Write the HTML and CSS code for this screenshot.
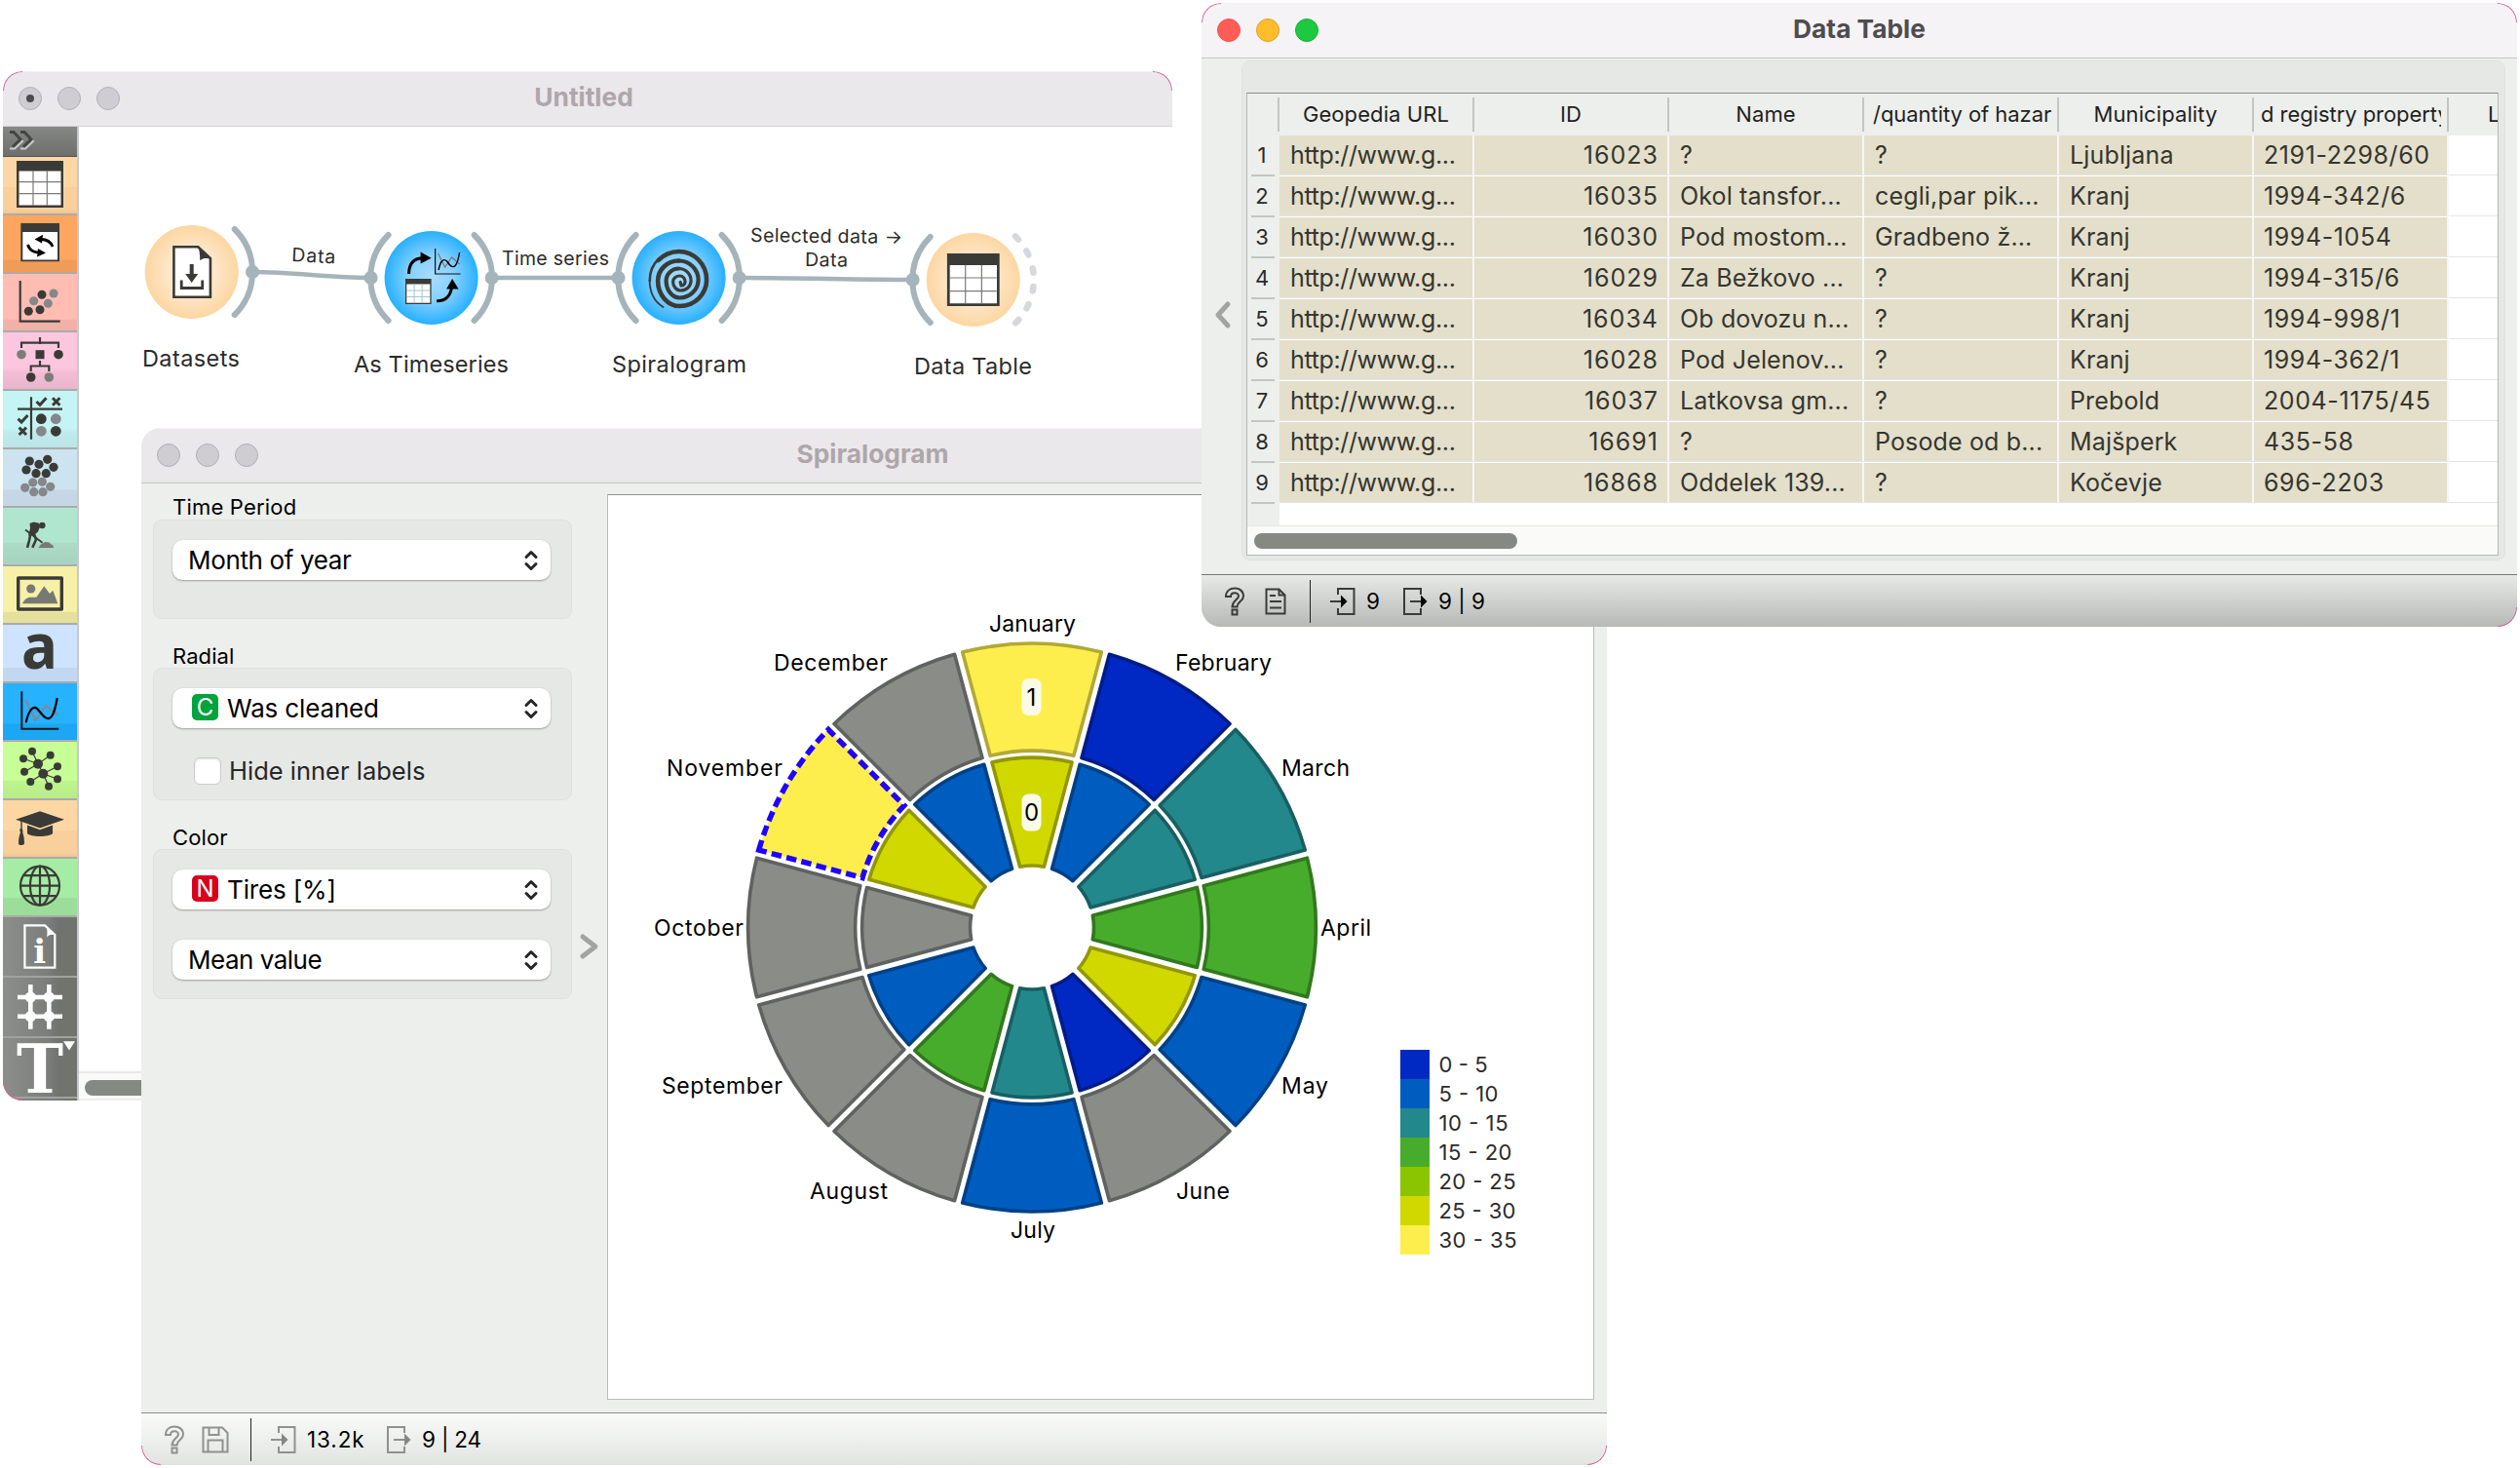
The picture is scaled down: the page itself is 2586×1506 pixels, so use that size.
FILE: index.html
```html
<!DOCTYPE html>
<html lang="en">
<head>
<meta charset="utf-8">
<title>Orange workflow</title>
<link rel="stylesheet" href="styles.css">
</head>
<body>
<main class="desktop">

<section class="window win-main">
  <i class="corner tl"></i><i class="corner tr"></i><i class="corner bl"></i>
  <header class="titlebar inactive">
    <span class="lights"><b class="dirty"></b><b></b><b></b></span>
    <h1>Untitled</h1>
  </header>
  <div class="main-body">
    <nav class="dock">
      <div class="dock-head">
        <svg width="76" height="32"><g fill="none"><path stroke="#c9cbc8" stroke-width="2" d="M7 22.500H12L20 15L13 8M18 22.500H23L31 15L24 8"/><path stroke="#444643" stroke-width="3" d="M7 5.500H11L18 13L10 20.500M18 5.500H22L29 13L21 20.500"/></g></svg>
      </div>
      <div class="cat data"><svg viewBox="0 0 76 58"><path class="k" d="M14 4h48v48H14z"/><path fill="#fff" d="M16.5 14.500h43v35h-43z"/><path class="thin" d="M31 14v36M45.300 14v36M16 25.700h44M16 37.700h44"/></svg></div>
      <div class="cat transform"><svg viewBox="0 0 76 58"><path class="k" d="M18.300 8h39.700v39.300H18.300z"/><path fill="#fff" d="M20.300 17h35.700v28.500H20.300z"/><g fill="none" stroke="#000" stroke-width="2.800"><path d="M51 32C49 27 44 24.500 39 24.500M25.500 30C27 35 31 37.500 36 38"/></g><path d="M32.500 24.500L41 19.800L40 28.500zM44 38.500L36 34L35 42.500z"/></svg></div>
      <div class="cat visualize"><svg viewBox="0 0 76 58"><path class="ln" d="M17.700 7v41.700h41"/><g class="k"><circle cx="40" cy="21.300" r="4.500"/><circle cx="26.300" cy="38.300" r="4.500"/><circle cx="38" cy="36.700" r="4.500"/></g><g class="g"><circle cx="52" cy="20" r="4.500"/><circle cx="31.700" cy="27.700" r="4.500"/><circle cx="46.300" cy="30.300" r="4.500"/></g></svg></div>
      <div class="cat model"><svg viewBox="0 0 76 58"><path class="ln" d="M38 5v7M19 16v-5.300h38V16M38 29v6M28.700 40v-5.500h18.600V40"/><path class="k" d="M33.500 18.200h9v9h-9z"/><g class="k"><circle cx="57" cy="22.700" r="4.800"/><circle cx="28.700" cy="46" r="4.800"/></g><g fill="#7b7d79"><circle cx="19" cy="22.700" r="4.800"/><circle cx="47.300" cy="46" r="4.800"/></g></svg></div>
      <div class="cat evaluate"><svg viewBox="0 0 76 58"><path class="ln" d="M29 6.300v43.400M15 18.700h46"/><path fill="none" stroke="#3a3b37" stroke-width="3" d="M34.500 11l3.500 3.300 6.500-7M15.500 28.700l3.500 3.300 6.500-7M51 7.300l7.400 7.400M58.400 7.300L51 14.700M16.600 37.600l7.400 7.400M24 37.600L16.600 45"/><g class="k"><circle cx="39.300" cy="28.700" r="5.400"/><circle cx="54.300" cy="41.300" r="5.400"/></g><g class="g"><circle cx="54.300" cy="28.700" r="5.400"/><circle cx="39.300" cy="41.300" r="5.400"/></g></svg></div>
      <div class="cat unsup"><svg viewBox="0 0 76 58"><g class="k"><circle cx="27.300" cy="12" r="4.600"/><circle cx="37" cy="15.300" r="4.600"/><circle cx="45.700" cy="10.300" r="4.600"/><circle cx="52" cy="18.300" r="4.600"/><circle cx="24" cy="21" r="4.600"/><circle cx="34" cy="24.700" r="4.600"/><circle cx="44.300" cy="24.700" r="4.600"/></g><g class="g"><circle cx="30.700" cy="34" r="4.600"/><circle cx="40.300" cy="33.300" r="4.600"/><circle cx="22.700" cy="39.300" r="4.600"/><circle cx="48.700" cy="38.300" r="4.600"/><circle cx="31.700" cy="43.700" r="4.600"/><circle cx="41" cy="43.700" r="4.600"/></g></svg></div>
      <div class="cat spectro"><svg viewBox="0 0 76 58"><circle class="k" cx="40.300" cy="18" r="3.300"/><path class="k" d="M27.500 16l4-1.500 5 1 1.500 4-2 5-4 3.500-6 .5 2-7.500z"/><path fill="none" stroke="#3a3b37" stroke-width="1.800" d="M23 22.500l17.500 13.300"/><path fill="none" stroke="#3a3b37" stroke-width="2.600" d="M28.500 26l-1.500 7.500-2 7.300M32 27l2 5.500-3.700 8.300"/><path fill="#777975" d="M36.300 41l2.700-3.500 4-2.500 4.500.5 2 2 1.500.5 1.300 3z"/></svg></div>
      <div class="cat image"><svg viewBox="0 0 76 58"><path fill="none" stroke="#3a3b37" stroke-width="3.400" stroke-linejoin="round" d="M15.700 12h44.600v32H15.700z"/><circle fill="#777975" cx="28.700" cy="23" r="4.600"/><path fill="#777975" d="M20 38.300c2-5 6-7 9-6.500l5.300-.1 8-11.400 5.700 7.700 3.300-3.300 5 13.600z"/></svg></div>
      <div class="cat text"><svg viewBox="0 0 76 58"><text class="glyph-a" x="19" y="45" textLength="37" lengthAdjust="spacingAndGlyphs">a</text></svg></div>
      <div class="cat series"><svg viewBox="0 0 76 58"><path fill="none" stroke="#14181c" stroke-width="2" d="M19.300 8.300v38.400h38"/><path fill="none" stroke="#84888c" stroke-width="2" d="M23.300 16.700l10 21.300L44 22.700l12 9.600"/><path fill="none" stroke="#000" stroke-width="2.200" d="M23.700 40.300C26 29 31 21 36 27C41 33 45 39 49.500 34.500C53.500 30 54 23 55.700 15"/></svg></div>
      <div class="cat network"><svg viewBox="0 0 76 58"><path fill="none" stroke="#3a3b37" stroke-width="1.200" d="M30 9.700l6 13M21 17.300l15 5.400 12.700-9M36 22.700L22 30.700M36 22.700l5.300 10 14.700-7.400M41.300 32.700l14.700 5.600M28.300 41l13-8.300 5.700 13"/><g class="k"><circle cx="30" cy="9.700" r="4"/><circle cx="21" cy="17.300" r="4"/><circle cx="48.700" cy="13.700" r="4"/><circle cx="36" cy="22.700" r="5"/><circle cx="56" cy="25.300" r="4"/><circle cx="22" cy="30.700" r="4"/><circle cx="41.300" cy="32.700" r="5"/><circle cx="56" cy="38.300" r="4"/><circle cx="28.300" cy="41" r="4"/><circle cx="47" cy="45.700" r="4"/></g></svg></div>
      <div class="cat edu"><svg viewBox="0 0 76 58"><path class="k" d="M13 19.700L38 11.300l25 8.400-25 8.800zM25 25.500l13 4.800 13-4.800V34c-3 4-23 4-26 0zM17.800 29c2.600 0 3 2 2.400 4 1.300 3 1.800 7 1.800 11.500-1.500 2-5 2-6 0 0-4.500.5-8 2-11.500-1-2-.6-4-.2-4z"/><path fill="none" stroke="#3a3b37" stroke-width="1.400" d="M19 21v10"/></svg></div>
      <div class="cat geo"><svg viewBox="0 0 76 58"><g class="ln"><circle cx="38" cy="27.700" r="20"/><ellipse cx="38" cy="27.700" rx="10" ry="20"/><path d="M38 7.700v40M18 27.700h40M22 17.200h32M22 38.200h32"/></g></svg></div>
      <div class="tool"><svg viewBox="0 0 76 60"><path fill="none" stroke="#fff" stroke-width="2.200" d="M22.400 8.400H43l10.300 9.600v33.700H22.400z"/><path fill="#fff" d="M43 7.500l11 10.500c-4-.5-7 0-9 2.500 1-5 .5-10-2-13z"/><text class="glyph-i" x="37.700" y="47" text-anchor="middle">i</text></svg></div>
      <div class="tool"><svg viewBox="0 0 76 60"><path fill="none" stroke="#fff" stroke-width="4.600" d="M28.300 7v45.700M47.300 7v45.700M15 20h46M15 39.700h46"/><g fill="#fff"><circle cx="28.300" cy="20" r="5.600"/><circle cx="47.300" cy="20" r="5.600"/><circle cx="28.300" cy="39.700" r="5.600"/><circle cx="47.300" cy="39.700" r="5.600"/></g></svg></div>
      <div class="tool"><svg viewBox="0 0 76 60"><text class="glyph-t" x="14" y="55.500" textLength="48" lengthAdjust="spacingAndGlyphs">T</text><path fill="#fff" d="M62 3.300h12l-6 9.300z"/></svg></div>
    </nav>
    <div class="canvas">
      <svg class="scheme" viewBox="81 130 1122 969" width="1122" height="969">
        <defs>
          <radialGradient id="gOrange"><stop offset="0" stop-color="#fdf0e0"/><stop offset=".55" stop-color="#fde5c6"/><stop offset="1" stop-color="#fdd6a1"/></radialGradient>
          <radialGradient id="gBlue"><stop offset="0" stop-color="#a6dcff"/><stop offset=".5" stop-color="#85d0ff"/><stop offset="1" stop-color="#27b0ff"/></radialGradient>
          <path id="arcR" d="M44 -44A62 62 0 0 1 44 44"/>
          <path id="arcL" d="M-44 -44A62 62 0 0 0 -44 44"/>
        </defs>
        <g class="link">
          <path d="M259 279C305 279 334 285 381 285M505 285H635M759 285C820 285 877 287 937 287"/>
        </g>
        <g transform="translate(196.700 279)">
          <circle r="48" fill="url(#gOrange)"/><use href="#arcR" class="arc"/><circle class="dot" cx="62.300" r="7"/>
          <path fill="#fff" stroke="#3a3b37" stroke-width="2.600" d="M-18.300 -25.700H6.500L19.200 -14V25.700H-18.300z"/><path class="k" d="M6 -27l14.500 13.500c-5-1-9-1-12 1.500 0-6-.5-11-2.500-15z"/>
          <path fill="none" stroke="#3a3b37" stroke-width="2.800" d="M-10.500 8.500v8h21.500v-8"/><path class="k" d="M-2 -8H2V2H6.500L0 11L-6.500 2H-2z"/>
        </g>
        <g transform="translate(442.600 285)">
          <circle r="48" fill="url(#gBlue)"/><use href="#arcL" class="arc"/><use href="#arcR" class="arc"/><circle class="dot" cx="-62" r="7"/><circle class="dot" cx="62" r="7"/>
          <path fill="none" stroke="#000" stroke-width="3" d="M-23 -4C-23 -15 -18 -20.300 -8 -20.300M5.500 23.700C15 24 20 18 21 9"/><path d="M-11 -26.500L0 -20.300L-11 -14.500zM15.500 11.500L21.500 1L28 11.500z"/>
          <path fill="none" stroke="#111" stroke-width="1.200" d="M4 -30V-4H30"/><path fill="none" stroke="#777" stroke-width="1.200" d="M7 -25l7 14 7-10 8 7"/><path fill="none" stroke="#000" stroke-width="1.400" d="M7.500 -8C9 -16 12 -21 16 -17C20 -11 23 -10 25 -13C27 -16 28 -20 29 -26"/>
          <path class="k" d="M-26.600 1H0V27H-26.600z"/><path fill="#fff" d="M-25.300 6.500H-1.300V25.700H-25.300z"/><path stroke="#9fc4dc" fill="none" d="M-17.500 6.500V25.500M-9.500 6.500V25.500M-25 13H-1.500M-25 19.500H-1.500"/>
        </g>
        <g transform="translate(696.600 285)">
          <circle r="48" fill="url(#gBlue)"/><use href="#arcL" class="arc"/><use href="#arcR" class="arc"/><circle class="dot" cx="-62" r="7"/><circle class="dot" cx="62" r="7"/>
          <g fill="none" stroke="#3a3b37" stroke-width="4.600" stroke-linecap="round"><path stroke-width="1.800" d="M-16 30C-26 24 -30 14 -30 2"/><path stroke-width="2.600" d="M-29.800 3A30 30 0 0 1 -20 -20"/><path d="M-21 -18A30 30 0 0 1 0 -27A28.500 29 0 0 1 28.500 2A27.500 27 0 0 1 1 29A22.500 26 0 0 1 -21.500 3A21.500 20.500 0 0 1 0 -17.500"/><path stroke-width="4.200" d="M0 -17.500A20 19.500 0 0 1 20 2A19 18.500 0 0 1 1 20.500A14 17.500 0 0 1 -13 3A13 12.500 0 0 1 0 -9.500"/><path stroke-width="3.200" d="M0 -9.500A12.500 12.500 0 0 1 12.500 3A10.500 10 0 0 1 2 13A8 9 0 0 1 -6 4A7 6 0 0 1 1 -2A5.500 6 0 0 1 6.500 4A4 4 0 0 1 2.500 8L1.500 4.500"/></g>
        </g>
        <g transform="translate(998.700 287)">
          <circle r="48" fill="url(#gOrange)"/><use href="#arcL" class="arc"/><circle class="dot" cx="-62" r="7"/>
          <path class="arc open" d="M43.300 -44.500A62 62 0 0 1 43.300 44.500"/>
          <path class="k" d="M-26.800 -27H27V27H-26.800z"/><path fill="#fff" d="M-24 -15H24.300V24.200H-24z"/><path class="thin" d="M-8 -15V24M8.700 -15V24M-24 -2H24M-24 11.700H24"/>
        </g>
        <g class="node-label">
          <text x="146" y="376" textLength="100">Datasets</text>
          <text x="363" y="382" textLength="159">As Timeseries</text>
          <text x="628" y="382" textLength="138">Spiralogram</text>
          <text x="938" y="384" textLength="121">Data Table</text>
        </g>
        <g class="link-label">
          <text x="299" y="268" textLength="45" transform="rotate(3 299 268)">Data</text>
          <text x="515" y="272" textLength="110">Time series</text>
          <text x="770" y="248" textLength="156" transform="rotate(.7 770 248)">Selected data →</text>
          <text x="826" y="273" textLength="44" transform="rotate(.7 826 273)">Data</text>
        </g>
      </svg>
      <div class="hscroll"><span></span></div>
    </div>
  </div>
</section>

<section class="window win-spiral">
  <i class="corner bl"></i><i class="corner br"></i>
  <header class="titlebar inactive">
    <span class="lights"><b></b><b></b><b></b></span>
    <h1>Spiralogram</h1>
  </header>
  <div class="spiral-body">
    <aside class="controls">
      <h2 class="s1">Time Period</h2>
      <div class="group g1">
        <div class="combo"><span class="t1">Month of year</span><svg width="16" height="24"><path d="M3 8.500L8 3.500L13 8.500M3 15.500L8 20.500L13 15.500"/></svg></div>
      </div>
      <h2>Radial</h2>
      <div class="group g2">
        <div class="combo"><em class="badge cvar">C</em><span class="t2">Was cleaned</span><svg width="16" height="24"><path d="M3 8.500L8 3.500L13 8.500M3 15.500L8 20.500L13 15.500"/></svg></div>
        <label class="check"><i></i><span>Hide inner labels</span></label>
      </div>
      <h2>Color</h2>
      <div class="group g3">
        <div class="combo"><em class="badge nvar">N</em><span class="t3">Tires [%]</span><svg width="16" height="24"><path d="M3 8.500L8 3.500L13 8.500M3 15.500L8 20.500L13 15.500"/></svg></div>
        <div class="combo"><span class="t4">Mean value</span><svg width="16" height="24"><path d="M3 8.500L8 3.500L13 8.500M3 15.500L8 20.500L13 15.500"/></svg></div>
      </div>
    </aside>
    <div class="splitter"><svg width="20" height="28"><path d="M3 4L16 14L3 24"/></svg></div>
    <div class="chart">
      <svg viewBox="624 508 1011 927" width="1011" height="927">
        <defs>
          <path id="so" d="M-71.330 -282.430A291.300 291.300 0 0 1 71.330 -282.430L42.850 -176.160A181.300 181.300 0 0 0 -42.850 -176.160Z"/>
          <path id="si" d="M-41.040 -169.400A174.300 174.300 0 0 1 41.040 -169.400L12.340 -62.290A63.500 63.500 0 0 0 -12.340 -62.290Z"/>
        </defs>
        <g class="ring" transform="translate(1059 951.500)">
          <use href="#so" class="c7"/>
          <use href="#so" class="c1" transform="rotate(30)"/>
          <use href="#so" class="c3" transform="rotate(60)"/>
          <use href="#so" class="c4" transform="rotate(90)"/>
          <use href="#so" class="c2" transform="rotate(120)"/>
          <use href="#so" class="c0" transform="rotate(150)"/>
          <use href="#so" class="c2" transform="rotate(180)"/>
          <use href="#so" class="c0" transform="rotate(210)"/>
          <use href="#so" class="c0" transform="rotate(240)"/>
          <use href="#so" class="c0" transform="rotate(270)"/>
          <use href="#so" class="c7 selected" transform="rotate(300)"/>
          <use href="#so" class="c0" transform="rotate(330)"/>
          <use href="#si" class="c6"/>
          <use href="#si" class="c2" transform="rotate(30)"/>
          <use href="#si" class="c3" transform="rotate(60)"/>
          <use href="#si" class="c4" transform="rotate(90)"/>
          <use href="#si" class="c6" transform="rotate(120)"/>
          <use href="#si" class="c1" transform="rotate(150)"/>
          <use href="#si" class="c3" transform="rotate(180)"/>
          <use href="#si" class="c4" transform="rotate(210)"/>
          <use href="#si" class="c2" transform="rotate(240)"/>
          <use href="#si" class="c0" transform="rotate(270)"/>
          <use href="#si" class="c6" transform="rotate(300)"/>
          <use href="#si" class="c2" transform="rotate(330)"/>
        </g>
        <g class="ring-label">
          <rect x="1048.500" y="696" width="20" height="38" rx="7"/><rect x="1048.500" y="814.500" width="20" height="38" rx="7"/>
          <text x="1058.500" y="724" text-anchor="middle">1</text><text x="1058.500" y="842" text-anchor="middle">0</text>
        </g>
        <g class="month">
          <text x="1015" y="648" textLength="89">January</text>
          <text x="1206" y="688" textLength="99">February</text>
          <text x="1315" y="796" textLength="70">March</text>
          <text x="1355" y="960" textLength="52">April</text>
          <text x="1315" y="1122" textLength="48">May</text>
          <text x="1207" y="1230" textLength="55">June</text>
          <text x="1037" y="1270" textLength="46">July</text>
          <text x="831" y="1230" textLength="80">August</text>
          <text x="679" y="1122" textLength="124">September</text>
          <text x="671" y="960" textLength="92">October</text>
          <text x="684" y="796" textLength="119">November</text>
          <text x="794" y="688" textLength="117">December</text>
        </g>
        <g class="swatches">
          <rect x="1437" y="1077" width="30" height="30" fill="#0029c3"/>
          <rect x="1437" y="1107" width="30" height="30" fill="#005dc0"/>
          <rect x="1437" y="1137" width="30" height="30" fill="#23888c"/>
          <rect x="1437" y="1167" width="30" height="30" fill="#47ac2b"/>
          <rect x="1437" y="1197" width="30" height="30" fill="#8bc400"/>
          <rect x="1437" y="1227" width="30" height="30" fill="#d1d800"/>
          <rect x="1437" y="1257" width="30" height="30" fill="#feee4d"/>
        </g>
        <g class="legend">
          <text x="1476.500" y="1100" textLength="50">0 - 5</text>
          <text x="1476.500" y="1130" textLength="61">5 - 10</text>
          <text x="1476.500" y="1160" textLength="71">10 - 15</text>
          <text x="1476.500" y="1190" textLength="75">15 - 20</text>
          <text x="1476.500" y="1220" textLength="79">20 - 25</text>
          <text x="1476.500" y="1250" textLength="79">25 - 30</text>
          <text x="1476.500" y="1280" textLength="80">30 - 35</text>
        </g>
      </svg>
    </div>
  </div>
  <footer class="status light">
    <svg class="q" width="22" height="30" viewBox="0 0 22 30"><path d="M2 10C2 4.500 6 1.500 11 1.500S20 4.500 20 9.500C20 15 13.500 15 13.500 20.500H8.500C8.500 14 15 13 15 9.500C15 5 7 5 7 10zM8.500 23.500h5v5h-5z"/></svg>
    <svg class="save" width="28" height="28" viewBox="0 0 28 28"><path d="M1.500 1.500H21L26.500 7V26.500H1.500zM7.500 2V9H17.500V2M6.500 26V14.500H21.500V26"/></svg>
    <i class="rule"></i>
    <svg class="io" width="26" height="30" viewBox="0 0 26 30"><path d="M8 8V2H24.500V28H8V22M0 15H12"/><path class="head" d="M11 8.500L17.500 15L11 21.500z"/></svg>
    <span class="n1">13.2k</span>
    <svg class="io out" width="26" height="30" viewBox="0 0 26 30"><path d="M18 8V2H1V28H18V22M7 15H20"/><path class="head" d="M18 8.500L24.500 15L18 21.500z"/></svg>
    <span class="n2">9 | 24</span>
  </footer>
</section>

<section class="window win-table">
  <i class="corner tl"></i><i class="corner tr"></i><i class="corner br"></i>
  <header class="titlebar">
    <span class="lights"><b class="red"></b><b class="yellow"></b><b class="green"></b></span>
    <h1>Data Table</h1>
  </header>
  <div class="table-body">
    <div class="collapse"><svg width="20" height="28"><path d="M15 3L5 14L15 25"/></svg></div>
    <div class="panel">
      <div class="frame">
        <div class="thead"><i></i><span>Geopedia URL</span><span>ID</span><span>Name</span><span class="clip h4">/quantity of hazar</span><span>Municipality</span><span class="clip h6">d registry property</span><span class="clip last">L</span></div>
        <div class="row"><i>1</i><span class="url">http://www.g...</span><span class="num">16023</span><span>?</span><span>?</span><span>Ljubljana</span><span class="reg">2191-2298/60</span><span></span></div>
        <div class="row"><i>2</i><span class="url">http://www.g...</span><span class="num">16035</span><span>Okol tansfor...</span><span>cegli,par pik...</span><span>Kranj</span><span class="reg">1994-342/6</span><span></span></div>
        <div class="row"><i>3</i><span class="url">http://www.g...</span><span class="num">16030</span><span>Pod mostom...</span><span>Gradbeno ž...</span><span>Kranj</span><span class="reg">1994-1054</span><span></span></div>
        <div class="row"><i>4</i><span class="url">http://www.g...</span><span class="num">16029</span><span>Za Bežkovo ...</span><span>?</span><span>Kranj</span><span class="reg">1994-315/6</span><span></span></div>
        <div class="row"><i>5</i><span class="url">http://www.g...</span><span class="num">16034</span><span>Ob dovozu n...</span><span>?</span><span>Kranj</span><span class="reg">1994-998/1</span><span></span></div>
        <div class="row"><i>6</i><span class="url">http://www.g...</span><span class="num">16028</span><span>Pod Jelenov...</span><span>?</span><span>Kranj</span><span class="reg">1994-362/1</span><span></span></div>
        <div class="row"><i>7</i><span class="url">http://www.g...</span><span class="num">16037</span><span>Latkovsa gm...</span><span>?</span><span>Prebold</span><span class="reg">2004-1175/45</span><span></span></div>
        <div class="row"><i>8</i><span class="url">http://www.g...</span><span class="num">16691</span><span>?</span><span>Posode od b...</span><span>Majšperk</span><span class="reg">435-58</span><span></span></div>
        <div class="row"><i>9</i><span class="url">http://www.g...</span><span class="num">16868</span><span>Oddelek 139...</span><span>?</span><span>Kočevje</span><span class="reg">696-2203</span><span></span></div>
        <div class="filler"></div>
        <div class="hscroll"><span></span></div>
      </div>
    </div>
  </div>
  <footer class="status dark">
    <svg class="q" width="22" height="30" viewBox="0 0 22 30"><path d="M2 10C2 4.500 6 1.500 11 1.500S20 4.500 20 9.500C20 15 13.500 15 13.500 20.500H8.500C8.500 14 15 13 15 9.500C15 5 7 5 7 10zM8.500 23.500h5v5h-5z"/></svg>
    <svg class="doc" width="22" height="28" viewBox="0 0 22 28"><path d="M1.500 1.500H14.500L20.500 7.500V26.500H1.500zM14.500 2V7.500H20M5 8H11M5 14H17M5 20.500H17"/></svg>
    <i class="rule"></i>
    <svg class="io" width="26" height="30" viewBox="0 0 26 30"><path d="M8 8V2H24.500V28H8V22M0 15H12"/><path class="head" d="M11 8.500L17.500 15L11 21.500z"/></svg>
    <span class="n3">9</span>
    <svg class="io out" width="26" height="30" viewBox="0 0 26 30"><path d="M18 8V2H1V28H18V22M7 15H20"/><path class="head" d="M18 8.500L24.500 15L18 21.500z"/></svg>
    <span class="n4">9 | 9</span>
  </footer>
</section>

</main>
</body>
</html>
```
FILE: styles.css
```css
* { box-sizing: border-box; }
body { margin: 0; background: #fff; font-family: Inter, "Liberation Sans", sans-serif; color: #000; }
h1, h2 { margin: 0; font-weight: 400; }
i, em { font-style: normal; }
svg { display: block; overflow: visible; }
.desktop { position: relative; width: 2586px; height: 1506px; overflow: hidden; }

/* windows */
.window { position: absolute; display: flex; flex-direction: column; overflow: hidden; }
.win-main { left: 3px; top: 73px; width: 1200px; height: 1056px; border-radius: 20px 20px 0 20px; }
.win-spiral { left: 145px; top: 439px; width: 1504px; height: 1064px; border-radius: 20px; background: #edefec; }
.win-table { left: 1233px; top: 3px; width: 1350px; height: 640px; border-radius: 20px; background: #edefec; }
.corner { position: absolute; width: 20px; height: 20px; z-index: 2; border: 0 solid #d9609f; }
.tl { left: 0; top: 0; border-width: 1px 0 0 1px; border-top-left-radius: 20px; }
.tr { right: 0; top: 0; border-width: 1px 1px 0 0; border-top-right-radius: 20px; }
.bl { left: 0; bottom: 0; border-width: 0 0 1px 1px; border-bottom-left-radius: 20px; }
.br { right: 0; bottom: 0; border-width: 0 1px 1px 0; border-bottom-right-radius: 20px; }

.titlebar { flex: none; height: 57px; display: grid; grid-template-columns: 140px 1fr 140px; align-items: center; background: #f5f3f6; border-bottom: 1px solid #c3c5c2; box-shadow: inset 0 1px 0 #f4f1f4; }
.titlebar.inactive { background: #ebe8eb; }
.win-main .titlebar { border-color: #d3d1d4; grid-template-columns: 140px 1fr 148px; }
.win-spiral .titlebar { grid-template-columns: 140px 1fr 143px; }
.titlebar h1 { font-size: 26.300px; font-weight: 700; text-align: center; color: #4f4c4f; line-height: 54px; height: 56px; }
.titlebar.inactive h1 { color: #aea6aa; }
.lights { display: flex; gap: 16px; padding-left: 16px; }
.lights b { width: 24px; height: 24px; border-radius: 50%; background: #d0cdd2; border: 1px solid #b2afb3; display: grid; place-items: center; }
.lights .dirty::after { content: ""; width: 8px; height: 8px; border-radius: 50%; background: #4c4a4c; }
.lights .red { background: #ff5d55; border-color: #f0524c; }
.lights .yellow { background: #ffbd2c; border-color: #e0a024; }
.lights .green { background: #1dc93f; border-color: #1aad33; }

/* widget dock */
.main-body { flex: 1; display: flex; min-height: 0; }
.dock { flex: none; width: 78px; border-right: 2px solid #c9c8cd; background: linear-gradient(90deg, #8a8c89, #6f716e); }
.dock svg { width: 76px; }
.dock-head { height: 31px; background: linear-gradient(#868885, #6d6f6c); border-bottom: 1px solid #555; }
.cat { height: 60px; border-bottom: 2px solid #aaaba9; }
.cat svg { height: 58px; }
.tool { height: 62px; border-bottom: 2px solid #a0a29f; background: linear-gradient(90deg, #8c8e8b, #7c7e7b 60%, #71736f 75%, #71736f); }
.tool svg { height: 60px; }
.k { fill: #3a3b37; }
.g { fill: #85878a; }
.ln { fill: none; stroke: #3a3b37; stroke-width: 2.200px; }
.thin { fill: none; stroke: #7a7b78; stroke-width: 1.200px; }
.data { background: linear-gradient(#fdd7a3 53%, #f9cf9c 54%, #f9cf9c 92%, #eec590); }
.transform { background: linear-gradient(#fea55f 78%, #f09c59 79%); }
.visualize { background: linear-gradient(#febcb3 80%, #f0b1a9 81%); }
.model { background: linear-gradient(#fdc6df 62%, #f3bcd5 72%, #e9b5cd); }
.evaluate { background: linear-gradient(#c4f4f4 65%, #bfe9ea 75%, #bbe6e8); }
.unsup { background: linear-gradient(#cce3f0 71%, #c5d7e4 72%); }
.spectro { background: linear-gradient(#b0e6d0 61%, #acdbc7 62%, #a6d4c0 91%); }
.image { background: linear-gradient(#f7f0a7 80%, #e5e09b 81%); }
.text { background: linear-gradient(#cde3ff 75%, #c2d7f0 76%); }
.series { background: linear-gradient(#27b2ff 71%, #1ca6f3 72%); }
.network { background: linear-gradient(#c7fe96 68%, #bdf48c 69%, #b8ec89); }
.edu { background: linear-gradient(#fdd7a3 53%, #f9cf9c 54%, #f9cf9c 92%, #eec590); }
.geo { background: linear-gradient(#a5eca4 69%, #9cdd9a 70%); }
.glyph-a { font: 700 64px "Noto Sans", sans-serif; fill: #3a3b37; }
.glyph-i { font: 700 34px "DejaVu Serif", serif; fill: #fff; }
.glyph-t { font: 700 70px "DejaVu Serif", serif; fill: #fff; }

/* workflow canvas */
.canvas { flex: 1; background: #fff; display: flex; flex-direction: column; width: 1122px; }
.canvas .hscroll { width: 600px; height: 31px; border-top: 2px solid #e8eae7; border-bottom: 2px solid #edefec; background: #fafbf9; padding: 7px 6px 0; }
.hscroll span { display: block; height: 16px; border-radius: 8px; background: #868883; }
.canvas .hscroll span { width: 400px; }
.link { fill: none; stroke: #a5b4bb; stroke-width: 4.400px; }
.arc { fill: none; stroke: #a5b4bb; stroke-width: 6px; stroke-linecap: round; }
.arc.open { stroke: #d7d8dd; stroke-dasharray: 4.500 14.350; stroke-width: 6.500px; }
.dot { fill: #a5b4bb; }
.node-label { font-size: 23.500px; fill: #2b2b2b; }
.link-label { font-size: 19.500px; fill: #2b2b2b; }

/* spiralogram */
.spiral-body { flex: 1; display: flex; min-height: 0; padding: 11px 13px 13px 12px; }
.controls { width: 430px; }
.controls h2 { font-size: 22px; line-height: 24px; padding-left: 20px; letter-spacing: .1px; height: 24px; margin-top: 26px; }
.controls .s1 { margin-top: 0; height: 26px; line-height: 26px; letter-spacing: .2px; }
.group { background: #e6e8e5; border: 1px solid #dfe1de; border-radius: 9px; padding: 20px 21px 0 19px; display: flex; flex-direction: column; }
.g1 { height: 102px; }
.g2 { height: 136px; }
.g3 { height: 154px; gap: 31px; }
.g1 + h2 { margin-top: 26px; }
.combo { flex: none; height: 41px; border-radius: 10px; background: #fff; box-shadow: 0 1px 2px rgba(0,0,0,.3), 0 0 1px rgba(0,0,0,.15); display: flex; align-items: center; padding: 0 12px 0 16px; font-size: 26px; }
.combo svg { margin-left: auto; }
.combo path { fill: none; stroke: #262626; stroke-width: 3px; stroke-linecap: round; stroke-linejoin: round; }
.t1, .t4 { letter-spacing: -.350px; }
.t2, .t3 { letter-spacing: -.150px; }
.t4 { letter-spacing: -.500px; }
.badge { width: 27px; height: 27px; border-radius: 5px; color: #fff; font-size: 24px; line-height: 27px; text-align: center; margin: 0 9px 2px 4px; }
.cvar { background: #00a33c; }
.nvar { background: #d9001b; }
.check { display: flex; align-items: center; gap: 8px; margin: 29px 0 0 22px; font-size: 25.500px; color: #262626; line-height: 30px; }
.check i { width: 28px; height: 28px; border-radius: 6px; background: #fff; border: 1px solid #cbcdca; box-shadow: inset 0 1px 2px rgba(0,0,0,.12); }
.splitter { width: 36px; padding: 450px 0 0 8px; }
.splitter path, .collapse path { fill: none; stroke: #a2a4a1; stroke-width: 5px; stroke-linecap: round; stroke-linejoin: round; }
.chart { width: 1013px; height: 929px; background: #fff; border: 1px solid #b9bcb8; border-top-color: #8f918e; overflow: hidden; }
.ring use { stroke-width: 3.600px; stroke-linejoin: round; }
.c0 { fill: #8a8c88; stroke: #60625f; }
.c1 { fill: #0029c3; stroke: #001c88; }
.c2 { fill: #005dc0; stroke: #004186; }
.c3 { fill: #23888c; stroke: #185f62; }
.c4 { fill: #47ac2b; stroke: #31781e; }
.c6 { fill: #d1d800; stroke: #929700; }
.c7 { fill: #feee4d; stroke: #b2a836; }
.ring .selected { stroke: #2000ff; stroke-width: 5.500px; stroke-dasharray: 10.500 5.300; stroke-linejoin: miter; }
.ring-label rect { fill: #fafbe6; }
.ring-label text { font-size: 24px; }
.month { font-size: 23px; }
.legend { font-size: 22px; fill: #2b2b2b; }

/* status bars */
.status { flex: none; height: 54px; display: flex; align-items: center; border-top: 1px solid #8b8d8a; font-size: 22.500px; }
.status.light { background: linear-gradient(#fafbf9, #f1f3f0 35%, #e2e4e1); padding-left: 23px; }
.status.dark { background: linear-gradient(#e7e9e6, #b7b9b6); border-color: #747673; padding-left: 23px; }
.status path { fill: none; stroke: #8f918e; stroke-width: 2px; }
.status .head { fill: #858784; stroke: none; }
.dark path { stroke: #3a3c39; }
.dark .head { fill: #000; }
.status .io { margin-left: 20px; }
.rule { width: 1px; height: 44px; background: #222; }
.save { margin: 0 22px 0 17px; }
.doc { margin: 0 24px 0 20px; }
.n1 { width: 72px; margin-left: 11px; letter-spacing: .900px; }
.n2 { margin-left: 10px; letter-spacing: -.200px; }
.n3 { width: 26px; margin-left: 11px; }
.n4 { margin-left: 10px; }
.status .out { margin-left: 10px; }
.dark .out { margin-left: 12px; }

/* data table */
.table-body { flex: 1; display: flex; min-height: 0; padding: 2px 12px 0 0; }
.collapse { width: 41px; padding: 247px 0 0 12px; }
.panel { width: 1297px; height: 513px; border: 1px solid #dfe1de; border-radius: 9px; background: #e6e8e5; padding: 32px 6px 5px 4px; }
.frame { height: 475px; border: 1px solid #b5b8b4; border-top-color: #8b8d8a; background: #fff; overflow: hidden; }
.thead, .row { display: grid; grid-template-columns: 33px repeat(7, 200px); }
.thead { height: 43px; background: #edefec; font-size: 22px; color: #1f1f1f; }
.thead span, .thead i { height: 35px; margin-top: 4px; border-right: 2px solid #c3c5c2; line-height: 34px; text-align: center; white-space: nowrap; }
.thead span { letter-spacing: .100px; }
.thead .clip { text-align: left; padding: 0 6px 0 9px; overflow: clip; overflow-clip-margin: content-box; letter-spacing: -.050px; }
.thead .h4 { overflow: visible; }
.thead .h6 { padding-left: 7px; }
.thead .last { padding-left: 40px; }
.row { height: 42px; font-size: 25px; color: #35362f; line-height: 41px; white-space: nowrap; }
.row span { background: #e4dfcb; border-right: 2px solid #f6f6f4; border-bottom: 1px solid #e5e6e3; height: 41px; padding-left: 11px; box-shadow: 0 1px 0 #fff; letter-spacing: .150px; }
.row span:last-child { background: #fff; }
.row .url { letter-spacing: -.350px; }
.row .num { text-align: right; padding-right: 9px; letter-spacing: 1px; }
.row .reg { letter-spacing: .600px; padding-left: 10px; }
.row i { background: #edefec; font-size: 22px; color: #2a2a2a; text-align: center; position: relative; padding-right: 3px; }
.row i::after { content: ""; position: absolute; left: 4px; bottom: 0; width: 24px; height: 2px; background: #c3c5c2; }
.filler { height: 22px; background: linear-gradient(90deg, #edefec 33px, #fff 33px); }
.frame .hscroll { height: 30px; border-top: 1px solid #e5e7e4; background: #fafbf9; padding: 7px 7px 0; }
.frame .hscroll span { width: 270px; }
```
